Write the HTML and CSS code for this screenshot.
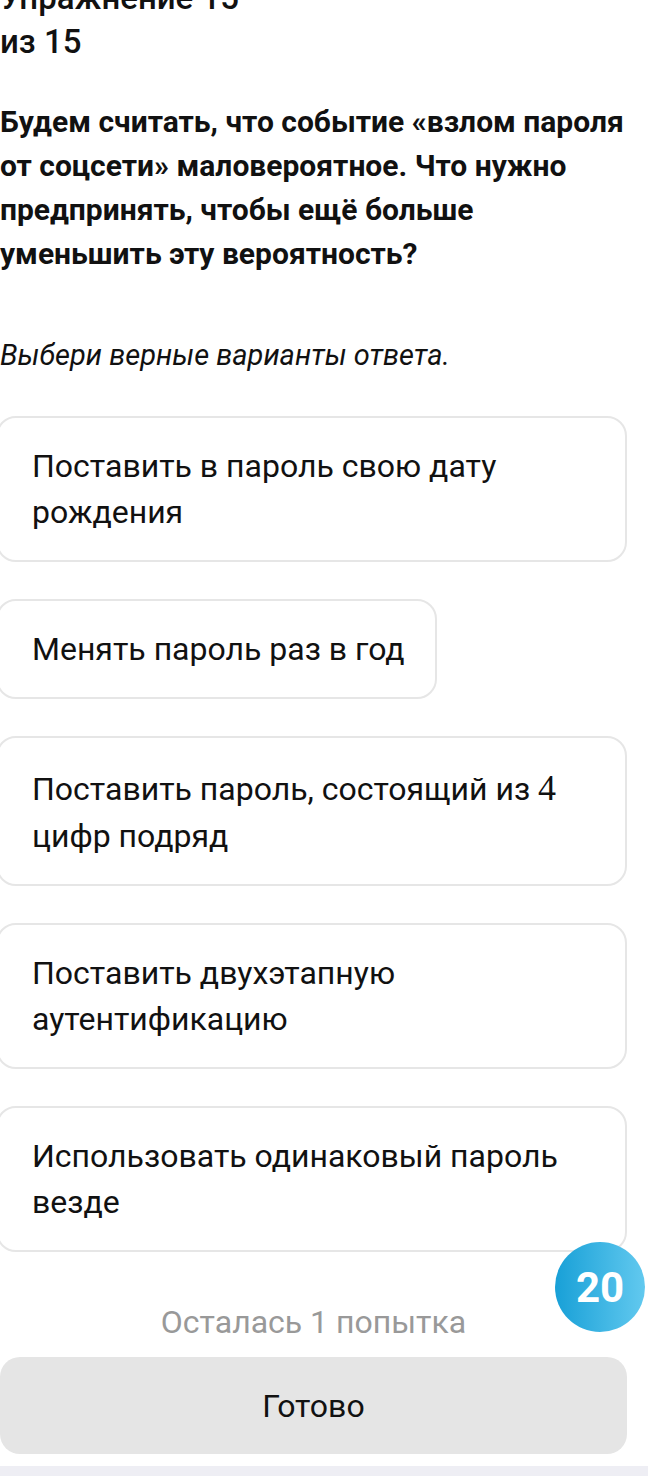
FILE: index.html
```html
<!DOCTYPE html>
<html>
<head>
    <meta charset="utf-8">
    <link rel="stylesheet" href="styles.css">
</head>
<body>

<div class="page">
    <div class="counter">Упражнение 15<br>из 15</div>

    <h2 class="question">Будем считать, что событие «взлом пароля от соцсети» маловероятное. Что нужно предпринять, чтобы ещё больше уменьшить эту вероятность?</h2>

    <p class="hint">Выбери верные варианты ответа.</p>

    <div class="options">
        <div class="option">Поставить в пароль свою дату рождения</div>
        <div class="option">Менять пароль раз в год</div>
        <div class="option">Поставить пароль, состоящий из <span class="math">4</span> цифр подряд</div>
        <div class="option">Поставить двухэтапную аутентификацию</div>
        <div class="option">Использовать одинаковый пароль везде</div>
    </div>

    <div class="footer">
        <div class="attempts">Осталась 1 попытка</div>
        <span class="badge">20</span>
        <button class="done">Готово</button>
    </div>
</div>
<div class="bottombar"></div>

</body>
</html>
```

FILE: styles.css
```css
* {
    box-sizing: border-box;
}

body {
    margin: 0;
    background: #fff;
    color: #111;
    font-family: Roboto, "Noto Sans", sans-serif;
}

.page {
    width: 627px;
}

.counter {
    font-size: 33px;
    font-weight: 500;
    line-height: 44px;
    margin-top: -24px;
}

.question {
    font-size: 30px;
    font-weight: 700;
    line-height: 44px;
    margin: 36px 0 0;
}

.hint {
    font-size: 29px;
    font-style: italic;
    line-height: 40px;
    margin: 59px 0 0;
}

.options {
    display: flex;
    flex-direction: column;
    align-items: flex-start;
    gap: 37px;
    margin-top: 41px;
    margin-left: -4px;
}

.option {
    border: 2px solid #e6e6e6;
    border-radius: 20px;
    padding: 25px 30px 25px 34px;
    font-size: 32px;
    line-height: 46px;
    max-width: 631px;
}

.math {
    font-family: "Liberation Serif", serif;
    font-size: 36px;
    line-height: 50px;
}

.footer {
    position: relative;
    padding-top: 50px;
}

.attempts {
    text-align: center;
    font-size: 32px;
    color: #999;
    line-height: 40px;
}

.badge {
    position: absolute;
    right: -18px;
    top: -10px;
    width: 90px;
    height: 90px;
    border-radius: 50%;
    background: linear-gradient(90deg, #18a0d7, #62c9ef);
    color: #fff;
    font-size: 42px;
    font-weight: 700;
    display: flex;
    align-items: center;
    justify-content: center;
}

.done {
    display: block;
    width: 100%;
    margin-top: 15px;
    height: 97px;
    border: none;
    border-radius: 20px;
    background: #e5e5e5;
    color: #111;
    font-family: inherit;
    font-size: 32px;
}

.bottombar {
    margin-top: 12px;
    height: 20px;
    background: #eeeef4;
}
```
